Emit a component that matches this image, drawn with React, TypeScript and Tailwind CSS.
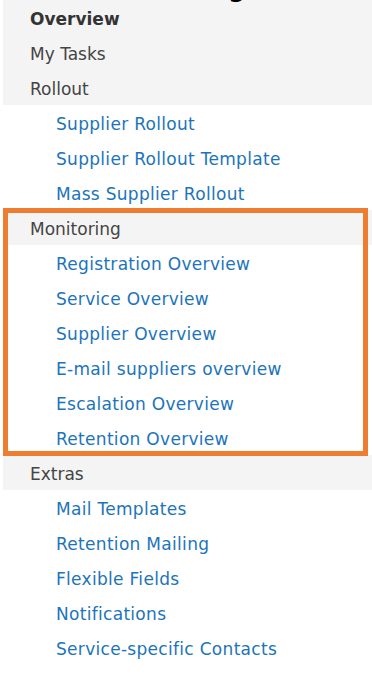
import React from "react";

type Item = { label: string; kind: "cat" | "sub"; bold?: boolean };

const top: Item[] = [
  { label: "Overview", kind: "cat", bold: true },
  { label: "My Tasks", kind: "cat" },
  { label: "Rollout", kind: "cat" },
  { label: "Supplier Rollout", kind: "sub" },
  { label: "Supplier Rollout Template", kind: "sub" },
  { label: "Mass Supplier Rollout", kind: "sub" },
];

const monitoring: Item[] = [
  { label: "Monitoring", kind: "cat" },
  { label: "Registration Overview", kind: "sub" },
  { label: "Service Overview", kind: "sub" },
  { label: "Supplier Overview", kind: "sub" },
  { label: "E-mail suppliers overview", kind: "sub" },
  { label: "Escalation Overview", kind: "sub" },
  { label: "Retention Overview", kind: "sub" },
];

const extras: Item[] = [
  { label: "Extras", kind: "cat" },
  { label: "Mail Templates", kind: "sub" },
  { label: "Retention Mailing", kind: "sub" },
  { label: "Flexible Fields", kind: "sub" },
  { label: "Notifications", kind: "sub" },
  { label: "Service-specific Contacts", kind: "sub" },
];

function Row({ item }: { item: Item }) {
  if (item.kind === "cat") {
    return (
      <div
        className={`h-[35px] flex items-center pt-[4px] bg-[#f4f4f4] pl-[27px] ${
          item.bold ? "font-bold text-[#333333]" : "text-[#444444]"
        }`}
      >
        {item.label}
      </div>
    );
  }
  return (
    <div className="h-[35px] flex items-center pt-[4px] pl-[53px] text-[#1c74bb] tracking-[0.3px]">
      <a className="cursor-pointer">{item.label}</a>
    </div>
  );
}

export default function App() {
  return (
    <div
      className="w-[372px] h-[680px] bg-white overflow-hidden text-[17px]"
      style={{ fontFamily: '"DejaVu Sans", Verdana, sans-serif' }}
    >
      <div className="h-0 overflow-visible">
        <div className="-translate-y-[23px] pl-[50px] text-[24px] leading-none font-bold text-black whitespace-nowrap">
          Rollout Management
        </div>
      </div>
      <div className="pl-[3px]">
        {top.map((it) => (
          <Row key={it.label} item={it} />
        ))}
        <div className="relative">
          {monitoring.map((it) => (
            <Row key={it.label} item={it} />
          ))}
          <div className="absolute top-[-2px] bottom-[-1px] left-0 right-[4px] border-[5px] border-[#ee7d31] pointer-events-none" />
        </div>
        {extras.map((it) => (
          <Row key={it.label} item={it} />
        ))}
      </div>
    </div>
  );
}
